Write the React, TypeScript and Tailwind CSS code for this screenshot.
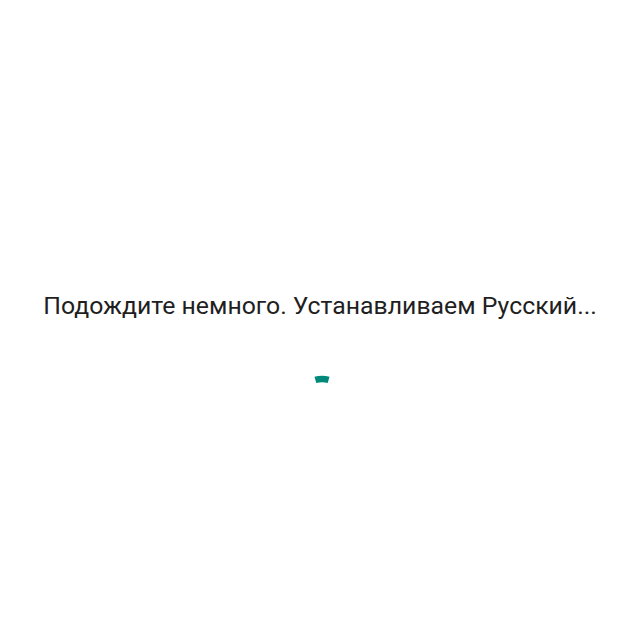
export default function App() {
  // arc on a circle r=24 centred at (28,28) in a 56x56 box, from -106deg to -74deg
  const r = 24;
  const cx = 28;
  const cy = 28;
  const a0 = (-106 * Math.PI) / 180;
  const a1 = (-74 * Math.PI) / 180;
  const x0 = cx + r * Math.cos(a0);
  const y0 = cy + r * Math.sin(a0);
  const x1 = cx + r * Math.cos(a1);
  const y1 = cy + r * Math.sin(a1);

  return (
    <div className="w-[640px] h-[640px] bg-white flex flex-col items-center pt-[290px]">
      <p
        className="text-[24.8px] leading-[32px] text-[#1f1f1f]"
        style={{ fontFamily: "Roboto, 'Noto Sans', sans-serif" }}
      >
        Подождите немного. Устанавливаем Русский...
      </p>
      <div className="mt-[53px] ml-[4px]">
        <svg width="56" height="56" viewBox="0 0 56 56">
          <path
            d={`M ${x0} ${y0} A ${r} ${r} 0 0 1 ${x1} ${y1}`}
            fill="none"
            stroke="#00897b"
            strokeWidth="6.5"
          />
        </svg>
      </div>
    </div>
  );
}
